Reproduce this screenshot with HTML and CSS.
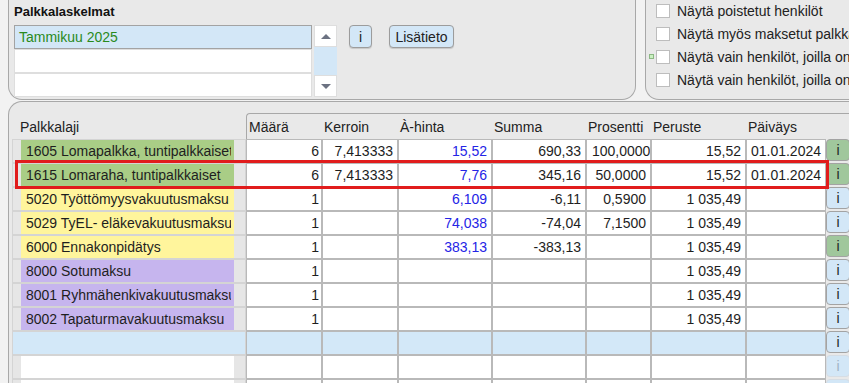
FILE: index.html
```html
<!DOCTYPE html>
<html lang="fi">
<head>
  <meta charset="UTF-8">
  <meta name="viewport" content="width=device-width, initial-scale=1.0">
  <title>Palkkalaskelmat</title>
  <link rel="stylesheet" href="styles.css">
</head>
<body>
  <div class="top">
    <!-- Palkkalaskelmat -->
    <div class="panel calc-panel">
      <h3>Palkkalaskelmat</h3>
      <div class="calc-row">
        <div class="calc-list">
          <div class="list-rows">
            <div class="list-row selected">Tammikuu 2025</div>
            <div class="list-row"></div>
            <div class="list-row"></div>
          </div>
          <div class="scrollbar">
            <div class="sb-btn"><span class="arrow-up"></span></div>
            <div class="sb-thumb"></div>
            <div class="sb-btn"><span class="arrow-down"></span></div>
          </div>
        </div>
        <button class="btn btn-i">i</button>
        <button class="btn btn-info">Lisätieto</button>
      </div>
    </div>
    <!-- Suodattimet -->
    <div class="panel filter-panel">
      <div class="check-list">
        <label class="check-row"><span class="box"></span>Näytä poistetut henkilöt</label>
        <label class="check-row"><span class="box"></span>Näytä myös maksetut palkkalaskelmat</label>
        <label class="check-row"><span class="marker"></span><span class="box"></span>Näytä vain henkilöt, joilla on palkkalaskelma</label>
        <label class="check-row"><span class="box"></span>Näytä vain henkilöt, joilla on maksamattomia</label>
      </div>
    </div>
  </div>

  <!-- Palkkalajit -->
  <div class="panel table-panel">
    <div class="grid">
      <div class="th th-name">Palkkalaji</div>
      <div class="th th-first">Määrä</div>
      <div class="th">Kerroin</div>
      <div class="th">À-hinta</div>
      <div class="th">Summa</div>
      <div class="th">Prosentti</div>
      <div class="th">Peruste</div>
      <div class="th">Päiväys</div>
      <div class="th"></div>

      <div class="name"><span class="label green">1605 Lomapalkka, tuntipalkkaiset</span></div>
      <div class="td qty">6</div>
      <div class="td">7,413333</div>
      <div class="td price">15,52</div>
      <div class="td">690,33</div>
      <div class="td clip">100,00000</div>
      <div class="td">15,52</div>
      <div class="td">01.01.2024</div>
      <div class="ibtn green-btn">i</div>

      <div class="name"><span class="label green">1615 Lomaraha, tuntipalkkaiset</span></div>
      <div class="td qty">6</div>
      <div class="td">7,413333</div>
      <div class="td price">7,76</div>
      <div class="td">345,16</div>
      <div class="td">50,0000</div>
      <div class="td">15,52</div>
      <div class="td">01.01.2024</div>
      <div class="ibtn green-btn">i</div>

      <div class="name"><span class="label yellow">5020 Työttömyysvakuutusmaksu</span></div>
      <div class="td qty">1</div>
      <div class="td"></div>
      <div class="td price">6,109</div>
      <div class="td">-6,11</div>
      <div class="td">0,5900</div>
      <div class="td">1 035,49</div>
      <div class="td"></div>
      <div class="ibtn">i</div>

      <div class="name"><span class="label yellow">5029 TyEL- eläkevakuutusmaksu</span></div>
      <div class="td qty">1</div>
      <div class="td"></div>
      <div class="td price">74,038</div>
      <div class="td">-74,04</div>
      <div class="td">7,1500</div>
      <div class="td">1 035,49</div>
      <div class="td"></div>
      <div class="ibtn">i</div>

      <div class="name"><span class="label yellow">6000 Ennakonpidätys</span></div>
      <div class="td qty">1</div>
      <div class="td"></div>
      <div class="td price">383,13</div>
      <div class="td">-383,13</div>
      <div class="td"></div>
      <div class="td">1 035,49</div>
      <div class="td"></div>
      <div class="ibtn green-btn">i</div>

      <div class="name"><span class="label purple">8000 Sotumaksu</span></div>
      <div class="td qty">1</div>
      <div class="td"></div>
      <div class="td"></div>
      <div class="td"></div>
      <div class="td"></div>
      <div class="td">1 035,49</div>
      <div class="td"></div>
      <div class="ibtn">i</div>

      <div class="name"><span class="label purple">8001 Ryhmähenkivakuutusmaksu</span></div>
      <div class="td qty">1</div>
      <div class="td"></div>
      <div class="td"></div>
      <div class="td"></div>
      <div class="td"></div>
      <div class="td">1 035,49</div>
      <div class="td"></div>
      <div class="ibtn">i</div>

      <div class="name"><span class="label purple">8002 Tapaturmavakuutusmaksu</span></div>
      <div class="td qty">1</div>
      <div class="td"></div>
      <div class="td"></div>
      <div class="td"></div>
      <div class="td"></div>
      <div class="td">1 035,49</div>
      <div class="td"></div>
      <div class="ibtn">i</div>

      <!-- uusi rivi -->
      <div class="name blue-row"></div>
      <div class="td blue-row"></div>
      <div class="td blue-row"></div>
      <div class="td blue-row"></div>
      <div class="td blue-row"></div>
      <div class="td blue-row"></div>
      <div class="td blue-row"></div>
      <div class="td blue-row"></div>
      <div class="ibtn">i</div>

      <div class="name"><span class="label"></span></div>
      <div class="td"></div>
      <div class="td"></div>
      <div class="td"></div>
      <div class="td"></div>
      <div class="td"></div>
      <div class="td"></div>
      <div class="td"></div>
      <div class="ibtn faded">i</div>

      <div class="name"><span class="label"></span></div>
      <div class="td"></div>
      <div class="td"></div>
      <div class="td"></div>
      <div class="td"></div>
      <div class="td"></div>
      <div class="td"></div>
      <div class="td"></div>
      <div class="ibtn faded">i</div>
    </div>
    <!-- korostus -->
    <div class="highlight"></div>
  </div>
</body>
</html>
```

FILE: styles.css
```css
* {
  box-sizing: border-box;
}
body {
  margin: 0;
  width: 849px;
  height: 383px;
  overflow: hidden;
  background-color: #f2f2f2;
  font-family: "Liberation Sans", Arial, sans-serif;
  font-size: 14px;
  color: #1e1e1e;
}
.top {
  display: flex;
  height: 100px;
}
.panel {
  background-color: #e9e9e9;
  border: 1px solid #a8a8a8;
}
.calc-panel {
  flex: none;
  width: 628px;
  margin-left: 8px;
  border-top: none;
  border-radius: 0 0 14px 14px;
  padding: 4px 0 0 5px;
}
.calc-panel h3 {
  margin: 0;
  font-size: 13px;
  line-height: 16px;
  color: #111;
}
.calc-row {
  display: flex;
  align-items: flex-start;
  margin-top: 5px;
}
.calc-list {
  display: flex;
  gap: 2px;
}
.list-rows {
  width: 298px;
}
.list-row {
  height: 24px;
  border: 1px solid #dedede;
  background-color: #fff;
  padding-left: 4px;
  line-height: 22px;
}
.list-row.selected {
  background-color: #d3e7f7;
  border-color: #a3a3a3;
  color: #2a8a1c;
}
.scrollbar {
  width: 23px;
  height: 72px;
  display: flex;
  flex-direction: column;
}
.sb-btn {
  height: 22px;
  background-color: #fff;
  border: 1px solid #dedede;
  display: flex;
  align-items: center;
  justify-content: center;
}
.sb-thumb {
  flex: 1;
  background-color: #d3e7f7;
}
.arrow-up {
  border-left: 5px solid transparent;
  border-right: 5px solid transparent;
  border-bottom: 5px solid #6c7282;
}
.arrow-down {
  border-left: 5px solid transparent;
  border-right: 5px solid transparent;
  border-top: 5px solid #6c7282;
}
.btn {
  height: 23px;
  border: 1px solid #9c9c9c;
  border-radius: 4px;
  background-color: #d3e7f7;
  font: inherit;
  color: #222;
  padding: 0;
  box-shadow: 0 1px 1px rgba(0, 0, 0, 0.15);
}
.btn-i {
  width: 23px;
  margin-left: 12px;
}
.btn-info {
  width: 65px;
  margin-left: 17px;
}
.filter-panel {
  flex: none;
  width: 260px;
  margin-left: 9px;
  border-top: none;
  border-right: none;
  border-radius: 0 0 0 14px;
  padding-left: 10px;
}
.check-list {
  margin-top: -1px;
}
.check-row {
  display: flex;
  align-items: center;
  height: 23px;
  white-space: nowrap;
  color: #222;
}
.box {
  width: 14px;
  height: 14px;
  background-color: #fff;
  border: 1px solid #bdbdbd;
  margin-right: 7px;
  flex: none;
}
.marker {
  width: 5px;
  height: 5px;
  margin-left: -7px;
  margin-right: 2px;
  background-color: #c9f0c0;
  border: 1px solid #8cb884;
  flex: none;
}
.table-panel {
  position: relative;
  margin: 1px 0 0 8px;
  height: 300px;
  border-right: none;
  border-bottom: none;
  border-radius: 14px 0 0 0;
  padding: 11px 0 0 3px;
}
.grid {
  display: grid;
  grid-template-columns: 234px 76px 76px 94px 94px 65px 95px 80px 24px;
  grid-template-rows: 26px;
  grid-auto-rows: 24px;
  width: 838px;
}
.th {
  border-top: 1px solid #a8a8a8;
  padding: 5px 0 0 2px;
  line-height: 16px;
  white-space: nowrap;
  color: #222;
}
.th-name {
  border-top: none;
  padding: 6px 0 0 8px;
}
.th-first {
  border-left: 1px solid #a8a8a8;
  border-top-left-radius: 4px;
}
.td {
  border: 1px solid #b9b9b9;
  background-color: #fff;
  text-align: right;
  padding-right: 4px;
  line-height: 22px;
  white-space: nowrap;
  overflow: hidden;
}
.td.qty {
  padding-right: 2px;
}
.td.price {
  color: #2424e6;
}
.td.clip {
  text-align: left;
  padding-left: 5px;
}
.name {
  background-color: #e6e6e6;
  border: 1px solid #d4d4d4;
  padding: 0 11px 0 8px;
}
.label {
  display: block;
  height: 100%;
  padding-left: 5px;
  border-right: 3px solid transparent;
  line-height: 22px;
  white-space: nowrap;
  overflow: hidden;
  background-color: #fff;
}
.label.green {
  background-color: #a9cd86;
}
.label.yellow {
  background-color: #fff59c;
}
.label.purple {
  background-color: #c6b5ee;
}
.blue-row {
  background-color: #d3e8f8;
}
.ibtn {
  margin-bottom: 2px;
  border: 1px solid #a3a3a3;
  border-radius: 4px;
  background-color: #d3e7f7;
  text-align: center;
  line-height: 20px;
  color: #222;
}
.ibtn.green-btn {
  background-color: #a0c79c;
}
.ibtn.faded {
  border-color: #d6dde4;
  color: #9fb3c4;
}
.highlight {
  position: absolute;
  left: 6px;
  top: 58px;
  width: 814px;
  height: 29px;
  border: 3px solid #e11c1c;
}
```
